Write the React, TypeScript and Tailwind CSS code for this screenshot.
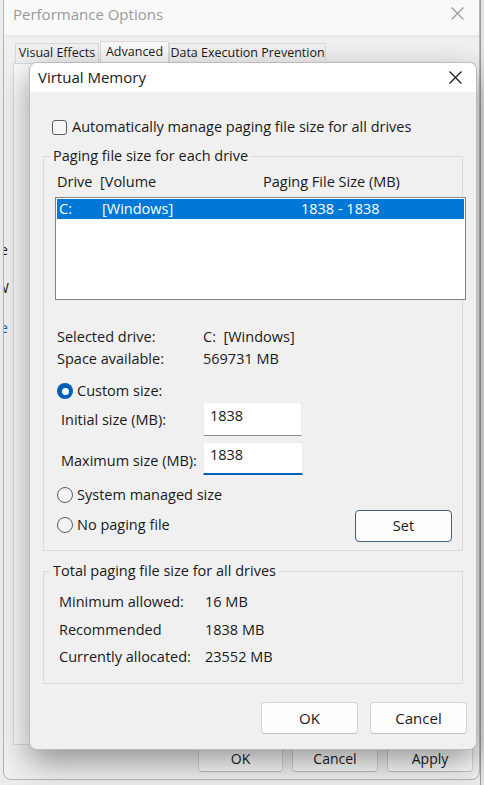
import React from "react";

const font = { fontFamily: '"Open Sans", "Noto Sans", sans-serif' };

function CloseIcon({ className = "" }: { className?: string }) {
  return (
    <svg viewBox="0 0 12 12" className={className} fill="none" stroke="currentColor" strokeWidth="1.1">
      <path d="M0.5 0.5 L11.5 11.5 M11.5 0.5 L0.5 11.5" />
    </svg>
  );
}

function Radio({ checked = false }: { checked?: boolean }) {
  if (checked) {
    return (
      <span className="flex h-[16px] w-[16px] shrink-0 items-center justify-center rounded-full bg-[#005fb8]">
        <span className="h-[7px] w-[7px] rounded-full bg-white" />
      </span>
    );
  }
  return <span className="h-[16px] w-[16px] shrink-0 rounded-full border border-[#5c5c5c] bg-[#f4f4f4]" />;
}

function WinButton({ label, className = "" }: { label: string; className?: string }) {
  return (
    <div
      className={`flex items-center justify-center rounded-[4px] border border-[#d4d4d4] border-b-[#c2c2c2] bg-[#fdfdfd] text-[#1a1a1a] ${className}`}
    >
      {label}
    </div>
  );
}

function GroupLabel({ children }: { children: React.ReactNode }) {
  return (
    <div className="ml-[6px] -mt-[11px] w-fit bg-[#f0f0f0] px-[3px] text-[14.5px] leading-[20px] text-[#1a1a1a]">
      {children}
    </div>
  );
}

function VirtualMemory() {
  return (
    <div className="absolute left-[29px] top-[62px] flex h-[688px] w-[448px] flex-col overflow-hidden rounded-[8px] border border-[#bcbcbc] bg-[#f0f0f0] shadow-[0_12px_32px_rgba(0,0,0,0.4)]">
      <div className="flex h-[29px] shrink-0 items-center justify-between bg-white pl-[8px] pr-[14px]">
        <span className="text-[15px] text-[#1a1a1a]">Virtual Memory</span>
        <CloseIcon className="h-[13px] w-[13px] text-[#1a1a1a]" />
      </div>

      <div className="flex flex-col text-[14.5px] text-[#1a1a1a]">
        <div className="ml-[22px] mt-[25px] flex h-[20px] items-center gap-[5px]">
          <span className="h-[15px] w-[15px] rounded-[3px] border border-[#5c5c5c] bg-[#f6f6f6]" />
          <span>Automatically manage paging file size for all drives</span>
        </div>

        <div className="mx-[13px] mt-[19px] flex h-[395px] flex-col border border-[#dadada]">
          <GroupLabel>Paging file size for each drive</GroupLabel>

          <div className="mt-[6px] flex h-[20px] items-center">
            <span className="ml-[13px] w-[43px]">Drive</span>
            <span className="w-[163px]">[Volume</span>
            <span>Paging File Size (MB)</span>
          </div>

          <div className="ml-[11px] mt-[5px] h-[103px] w-[411px] border border-[#838383] bg-white p-[1px]">
            <div className="flex h-[20px] items-center bg-[#0078d7] text-white">
              <span className="ml-[2px] w-[43px]">C:</span>
              <span className="w-[199px]">[Windows]</span>
              <span>1838 - 1838</span>
            </div>
          </div>

          <div className="mt-[27px] flex h-[20px] items-center pl-[13px]">
            <span className="w-[146px]">Selected drive:</span>
            <span>C:&nbsp; [Windows]</span>
          </div>
          <div className="mt-[2px] flex h-[20px] items-center pl-[13px]">
            <span className="w-[146px]">Space available:</span>
            <span>569731 MB</span>
          </div>

          <div className="mt-[12px] flex h-[20px] items-center gap-[4px] pl-[13px]">
            <Radio checked />
            <span>Custom size:</span>
          </div>

          <div className="mt-[1px] flex items-center pl-[17px]">
            <span className="w-[142px] pt-[2px]">Initial size (MB):</span>
            <div className="h-[34px] w-[99px] rounded-t-[3px] border border-[#ececec] border-b-[#8b8b8b] bg-white px-[6px] pt-[3px] leading-[20px]">
              1838
            </div>
          </div>

          <div className="mt-[6px] flex items-center pl-[17px]">
            <span className="w-[142px] pt-[4px]">Maximum size (MB):</span>
            <div className="h-[33px] w-[100px] rounded-t-[3px] border border-b-2 border-[#ececec] border-b-[#005fb8] bg-white px-[6px] pt-[2px] leading-[20px]">
              1838
            </div>
          </div>

          <div className="mt-[10px] flex items-start pl-[13px]">
            <div className="flex flex-col gap-[10px]">
              <div className="flex h-[20px] items-center gap-[4px]">
                <Radio />
                <span>System managed size</span>
              </div>
              <div className="flex h-[20px] items-center gap-[4px]">
                <Radio />
                <span>No paging file</span>
              </div>
            </div>
            <div className="ml-auto mr-[10px] mt-[25px] flex h-[32px] w-[97px] items-center justify-center rounded-[4px] border border-[#3d5f86] bg-[#fdfdfd]">
              Set
            </div>
          </div>
        </div>

        <div className="mx-[13px] mt-[20px] flex h-[113px] flex-col border border-[#dadada]">
          <GroupLabel>Total paging file size for all drives</GroupLabel>
          <div className="mt-[11px] flex h-[20px] items-center pl-[15px]">
            <span className="w-[146px]">Minimum allowed:</span>
            <span>16 MB</span>
          </div>
          <div className="mt-[8px] flex h-[20px] items-center pl-[15px]">
            <span className="w-[146px]">Recommended</span>
            <span>1838 MB</span>
          </div>
          <div className="mt-[7px] flex h-[20px] items-center pl-[15px]">
            <span className="w-[146px]">Currently allocated:</span>
            <span>23552 MB</span>
          </div>
        </div>

        <div className="mr-[9px] mt-[18px] flex justify-end gap-[12px]">
          <WinButton label="OK" className="h-[32px] w-[97px] text-[15px]" />
          <WinButton label="Cancel" className="h-[32px] w-[97px] text-[15px]" />
        </div>
      </div>
    </div>
  );
}

function PerformanceOptions() {
  const tab = "flex h-[20px] items-center border border-b-0 border-[#d9d9d9] bg-[#f0f0f0] text-[12.5px] text-[#1a1a1a]";
  return (
    <div className="absolute left-[3px] top-[-10px] flex h-[790px] w-[477px] flex-col overflow-hidden rounded-[8px] border border-[#b5b5b5] bg-[#f0f0f0]">
      <div className="flex h-[44px] shrink-0 items-end justify-between bg-[#f9f9f9] pb-[11px] pl-[9px] pr-[15px]">
        <span className="text-[15px] leading-[20px] text-[#9a9a9a]">Performance Options</span>
        <CloseIcon className="mb-[4px] h-[13px] w-[13px] text-[#9a9a9a]" />
      </div>
      <div className="h-[3px] bg-[#e9e9e9]" />
      <div className="ml-[11px] mt-[3px] flex items-end">
        <div className={`${tab} w-[84px] justify-center`}>Visual Effects</div>
        <div className={`${tab} ml-[1px] h-[22px] w-[69px] justify-center bg-[#f9f9f9]`}>Advanced</div>
        <div className={`${tab} w-[157px] justify-center`}>Data Execution Prevention</div>
      </div>
      <div className="relative ml-[9px] mr-[8px] h-[682px] border border-[#d9d9d9] bg-[#f9f9f9]">
        <span className="absolute left-[-14px] top-[175px] text-[14px] text-[#1a1a1a]">e</span>
        <span className="absolute left-[-18px] top-[213px] text-[14px] text-[#1a1a1a]">W</span>
        <span className="absolute left-[-14px] top-[253px] text-[14px] text-[#0066cc]">e</span>
      </div>
      <div className="mr-[6px] flex justify-end gap-[9px]">
        <WinButton label="OK" className="h-[27px] w-[85px] rounded-[3px] border-[#bdbdbd] bg-[#e4e4e4] text-[14px]" />
        <WinButton label="Cancel" className="h-[27px] w-[86px] rounded-[3px] border-[#bdbdbd] bg-[#e4e4e4] text-[14px]" />
        <WinButton label="Apply" className="h-[27px] w-[86px] rounded-[3px] border-[#bdbdbd] bg-[#e4e4e4] text-[14px]" />
      </div>
    </div>
  );
}

export default function App() {
  return (
    <div className="relative h-[785px] w-[484px] overflow-hidden bg-[#ececec]" style={font}>
      <div className="absolute right-0 top-0 h-full w-[4px] border-l border-[#9c9c9c] bg-[#e3e3e3]" />
      <PerformanceOptions />
      <VirtualMemory />
    </div>
  );
}
